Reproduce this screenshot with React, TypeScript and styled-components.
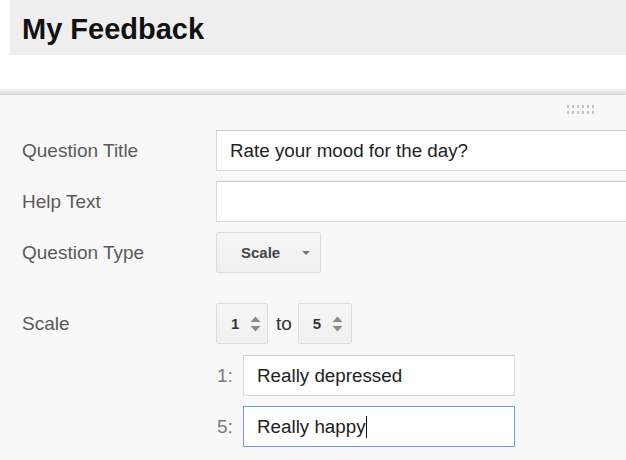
import React from "react";
import styled, { createGlobalStyle } from "styled-components";

const Global = createGlobalStyle`
  html, body { margin: 0; padding: 0; background: #ffffff; }
  body { font-family: "Liberation Sans", Arial, sans-serif; }
  * { box-sizing: border-box; }
`;

const Page = styled.div`
  width: 626px;
  height: 460px;
  overflow: hidden;
  background: #ffffff;
`;

const Header = styled.div`
  margin-left: 10px;
  height: 55px;
  padding: 3px 0 0 12px;
  background: #eeeeee;
`;

const Title = styled.h1`
  margin: 0;
  font-size: 29px;
  line-height: 52px;
  font-weight: 700;
  color: #111111;
`;

const Shadow = styled.div`
  margin-top: 33px;
  height: 7px;
  background: linear-gradient(to bottom, #fbfbfb 0%, #ececec 45%, #d6d6d6 100%);
`;

const Panel = styled.div`
  background: #f8f8f8;
  height: 370px;
  padding: 9px 0 0 22px;
`;

const HandleBar = styled.div`
  display: flex;
  justify-content: flex-end;
  height: 12px;
  padding-right: 31px;
`;

const Form = styled.div`
  display: flex;
  flex-direction: column;
  margin-top: 14px;
`;

const Row = styled.div<{ $gap?: number }>`
  display: flex;
  align-items: center;
  height: 41px;
  margin-top: ${(p) => p.$gap ?? 10}px;
  &:first-child { margin-top: 0; }
`;

const Label = styled.div`
  width: 194px;
  flex: none;
  font-size: 19px;
  color: #5a5a5a;
`;

const Prefix = styled.div`
  width: 27px;
  flex: none;
  padding-left: 1px;
  font-size: 19px;
  color: #7a7a7a;
`;

const TextField = styled.div<{ $width: number; $focused?: boolean }>`
  width: ${(p) => p.$width}px;
  height: 41px;
  flex: none;
  display: flex;
  align-items: center;
  padding: 0 13px;
  background: #ffffff;
  border: 1px solid ${(p) => (p.$focused ? "#6d9de0" : "#d9d9d9")};
  border-top-color: ${(p) => (p.$focused ? "#6d9de0" : "#c8c8c8")};
  font-size: 18.8px;
  color: #222222;
  white-space: nowrap;
`;

const Caret = styled.span`
  display: inline-block;
  width: 1px;
  height: 22px;
  background: #111111;
`;

const SelectButton = styled.div`
  width: 105px;
  height: 41px;
  display: flex;
  align-items: center;
  padding-left: 24px;
  background: linear-gradient(to bottom, #f5f5f5, #f0f0f0);
  border: 1px solid #dcdcdc;
  border-radius: 2px;
  font-size: 15px;
  font-weight: 700;
  color: #444444;
`;

const SelectArrow = styled.span`
  margin-left: 22px;
  width: 0;
  height: 0;
  border-left: 4px solid transparent;
  border-right: 4px solid transparent;
  border-top: 4px solid #777777;
`;

const Spinner = styled.div<{ $width: number }>`
  width: ${(p) => p.$width}px;
  height: 41px;
  display: flex;
  align-items: center;
  padding-left: 14px;
  background: linear-gradient(to bottom, #f5f5f5, #f0f0f0);
  border: 1px solid #dcdcdc;
  border-radius: 2px;
  font-size: 15px;
  font-weight: 700;
  color: #333333;
`;

const SpinnerIcon = styled.svg`
  margin-left: 11px;
  flex: none;
`;

const ToText = styled.span`
  margin: 0 6px 0 8px;
  font-size: 19px;
  color: #333333;
`;

const Dots = () => (
  <svg width="28" height="11" viewBox="0 0 28 11">
    {[0, 1].map((r) =>
      [0, 1, 2, 3, 4, 5].map((c) => (
        <rect key={`${r}-${c}`} x={c * 5} y={1 + r * 6} width="2" height="3" fill="#c4c4c4" />
      ))
    )}
  </svg>
);

const Arrows = () => (
  <SpinnerIcon width="11" height="16" viewBox="0 0 11 16">
    <path d="M5.5 0.5 L10.5 6 L0.5 6 Z" fill="#8a8a8a" />
    <path d="M0.5 10 L10.5 10 L5.5 15.5 Z" fill="#8a8a8a" />
  </SpinnerIcon>
);

export default function App() {
  return (
    <Page>
      <Global />
      <Header>
        <Title>My Feedback</Title>
      </Header>
      <Shadow />
      <Panel>
        <HandleBar>
          <Dots />
        </HandleBar>
        <Form>
          <Row>
            <Label>Question Title</Label>
            <TextField $width={430}>Rate your mood for the day?</TextField>
          </Row>
          <Row>
            <Label>Help Text</Label>
            <TextField $width={430} />
          </Row>
          <Row>
            <Label>Question Type</Label>
            <SelectButton>
              Scale
              <SelectArrow />
            </SelectButton>
          </Row>
          <Row $gap={30}>
            <Label>Scale</Label>
            <Spinner $width={52}>
              1
              <Arrows />
            </Spinner>
            <ToText>to</ToText>
            <Spinner $width={54}>
              5
              <Arrows />
            </Spinner>
          </Row>
          <Row $gap={11}>
            <Label />
            <Prefix>1:</Prefix>
            <TextField $width={272}>Really depressed</TextField>
          </Row>
          <Row>
            <Label />
            <Prefix>5:</Prefix>
            <TextField $width={272} $focused>
              Really happy
              <Caret />
            </TextField>
          </Row>
        </Form>
      </Panel>
    </Page>
  );
}
